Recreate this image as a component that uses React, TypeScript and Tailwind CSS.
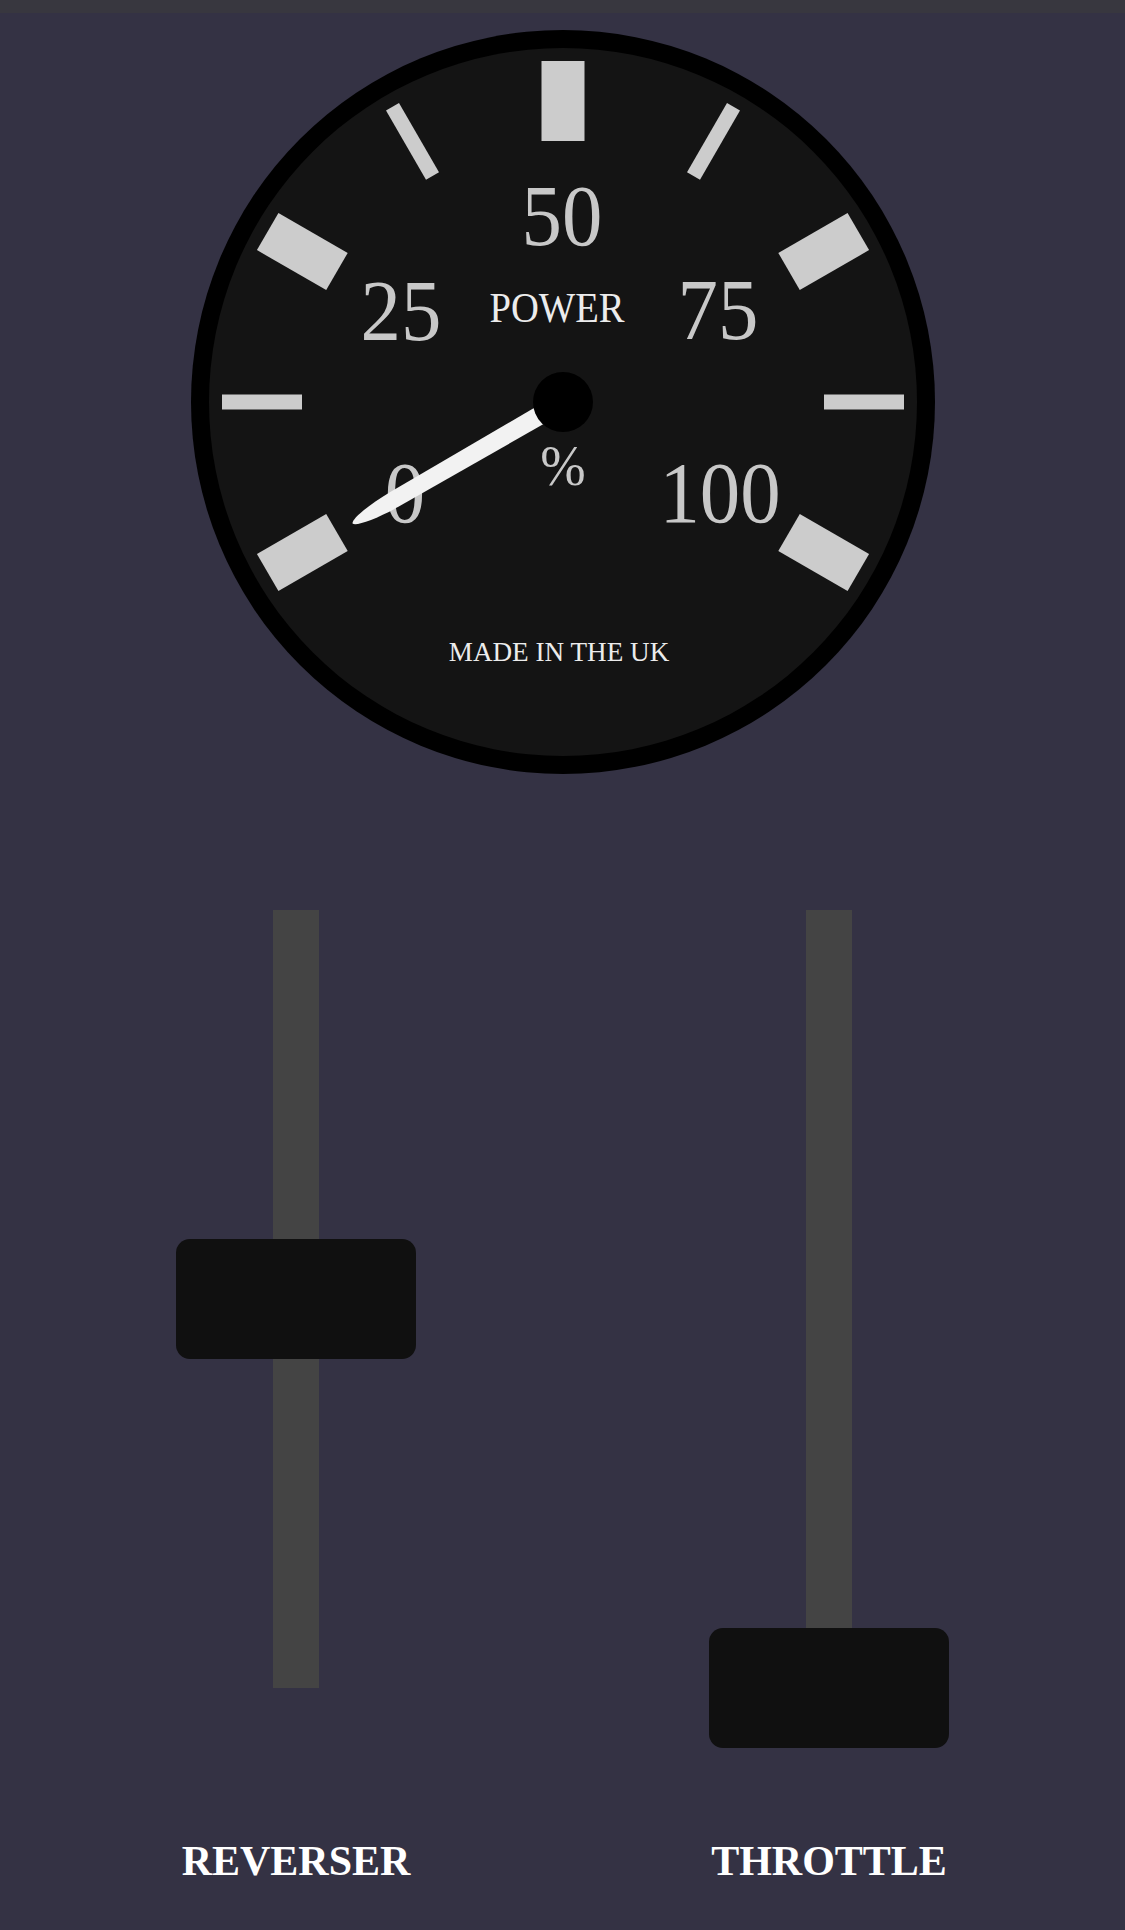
import React from "react";

const SERIF = '"Liberation Serif", "Times New Roman", serif';

type Tick = { angle: number; major: boolean };

// Dial sweep runs from -120deg (0%) to +120deg (100%); majors every 60deg, minors between.
const TICKS: Tick[] = [
  { angle: -120, major: true },
  { angle: -90, major: false },
  { angle: -60, major: true },
  { angle: -30, major: false },
  { angle: 0, major: true },
  { angle: 30, major: false },
  { angle: 60, major: true },
  { angle: 90, major: false },
  { angle: 120, major: true },
];

type DialText = { text: string; x: number; y: number; size: number; sx: number; fill: string };

const DIAL_TEXT: DialText[] = [
  { text: "50", x: 371, y: 215, size: 86, sx: 0.94, fill: "#c8c8c8" },
  { text: "25", x: 210, y: 310, size: 86, sx: 0.94, fill: "#c8c8c8" },
  { text: "75", x: 527, y: 309, size: 86, sx: 0.94, fill: "#c8c8c8" },
  { text: "POWER", x: 366, y: 292, size: 42, sx: 0.92, fill: "#ececec" },
  { text: "0", x: 214, y: 492, size: 86, sx: 0.94, fill: "#c8c8c8" },
  { text: "100", x: 529, y: 492, size: 86, sx: 0.94, fill: "#c8c8c8" },
  { text: "%", x: 372, y: 455, size: 58, sx: 0.94, fill: "#c8c8c8" },
  { text: "MADE IN THE UK", x: 368, y: 631, size: 28, sx: 0.97, fill: "#ececec" },
];

function Gauge({ value }: { value: number }) {
  const size = 744;
  const c = size / 2;
  const needleAngle = -120 + (value / 100) * 240;

  return (
    <svg width={size} height={size} viewBox={`0 0 ${size} ${size}`} className="block">
      <circle cx={c} cy={c} r={372} fill="#000000" />
      <circle cx={c} cy={c} r={354} fill="#141414" />

      {TICKS.map((t) => {
        const w = t.major ? 43 : 15;
        return (
          <rect
            key={t.angle}
            x={c - w / 2}
            y={c - 341}
            width={w}
            height={80}
            fill="#cccccc"
            transform={`rotate(${t.angle} ${c} ${c})`}
          />
        );
      })}

      <g fontFamily={SERIF} textAnchor="middle">
        {DIAL_TEXT.map((d) => (
          <text
            key={d.text}
            x={0}
            y={0}
            fontSize={d.size}
            fill={d.fill}
            transform={`translate(${d.x} ${d.y}) scale(${d.sx} 1)`}
          >
            {d.text}
          </text>
        ))}
      </g>

      <g transform={`translate(${c} ${c}) rotate(${needleAngle})`}>
        <path
          d="M -9.5 0 L -8.5 -195 C -8 -222 -4 -242 0 -243 C 4 -242 8 -222 8.5 -195 L 9.5 0 Z"
          fill="#f2f2f2"
        />
      </g>
      <circle cx={c} cy={c} r={30} fill="#000000" />
    </svg>
  );
}

function Slider({ value, label }: { value: number; label: string }) {
  const trackHeight = 778;
  const handleTop = (1 - value) * trackHeight - 60;
  return (
    <div className="flex w-[240px] flex-col items-center">
      <div className="relative flex h-[778px] w-full justify-center">
        <div className="h-full w-[46px] bg-[#444444]" />
        <div
          className="absolute left-0 h-[120px] w-[240px] rounded-[14px] bg-[#101010]"
          style={{ top: handleTop }}
        />
      </div>
      <div
        className="mt-[152px] whitespace-nowrap text-center text-[42px] font-bold leading-none text-white"
        style={{ fontFamily: SERIF }}
      >
        {label}
      </div>
    </div>
  );
}

export default function App() {
  return (
    <div className="flex min-h-[1930px] w-full flex-col bg-[#343244]">
      <div className="h-[13px] w-full bg-[#38373f]" />
      <div className="mt-[17px] flex justify-center">
        <Gauge value={0} />
      </div>
      <div className="mt-[136px] flex justify-center gap-[293px]">
        <Slider value={0.5} label="REVERSER" />
        <Slider value={0} label="THROTTLE" />
      </div>
    </div>
  );
}
